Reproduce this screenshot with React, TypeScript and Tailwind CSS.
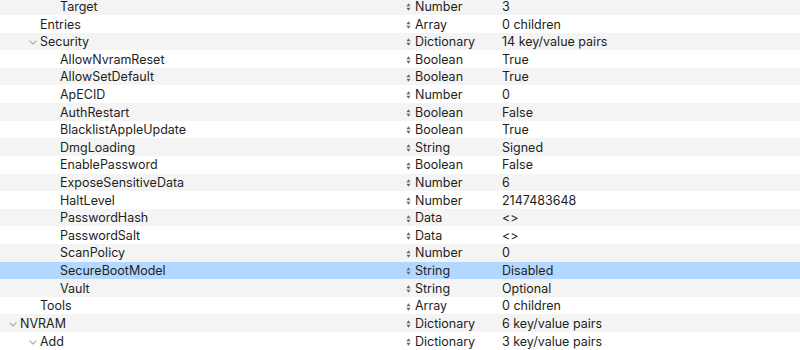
import React from "react";

type Row = { key: string; level: number; expanded?: boolean; type: string; value: string; selected?: boolean };

const rows: Row[] = [
  { key: "Target", level: 2, type: "Number", value: "3" },
  { key: "Entries", level: 1, type: "Array", value: "0 children" },
  { key: "Security", level: 1, expanded: true, type: "Dictionary", value: "14 key/value pairs" },
  { key: "AllowNvramReset", level: 2, type: "Boolean", value: "True" },
  { key: "AllowSetDefault", level: 2, type: "Boolean", value: "True" },
  { key: "ApECID", level: 2, type: "Number", value: "0" },
  { key: "AuthRestart", level: 2, type: "Boolean", value: "False" },
  { key: "BlacklistAppleUpdate", level: 2, type: "Boolean", value: "True" },
  { key: "DmgLoading", level: 2, type: "String", value: "Signed" },
  { key: "EnablePassword", level: 2, type: "Boolean", value: "False" },
  { key: "ExposeSensitiveData", level: 2, type: "Number", value: "6" },
  { key: "HaltLevel", level: 2, type: "Number", value: "2147483648" },
  { key: "PasswordHash", level: 2, type: "Data", value: "<>" },
  { key: "PasswordSalt", level: 2, type: "Data", value: "<>" },
  { key: "ScanPolicy", level: 2, type: "Number", value: "0" },
  { key: "SecureBootModel", level: 2, type: "String", value: "Disabled", selected: true },
  { key: "Vault", level: 2, type: "String", value: "Optional" },
  { key: "Tools", level: 1, type: "Array", value: "0 children" },
  { key: "NVRAM", level: 0, expanded: true, type: "Dictionary", value: "6 key/value pairs" },
  { key: "Add", level: 1, expanded: true, type: "Dictionary", value: "3 key/value pairs" },
];

const indentClass = ["w-[20px]", "w-[40px]", "w-[60px]"];

function Chevron() {
  return (
    <svg width="8" height="5" viewBox="0 0 8 5" className="absolute left-[-11px] top-[4px]">
      <path d="M0.6 0.6 L4 4 L7.4 0.6" fill="none" stroke="#a8a8a8" strokeWidth="1.1" />
    </svg>
  );
}

function UpDown() {
  return (
    <svg width="5" height="8" viewBox="0 0 5 8" className="shrink-0">
      <path d="M2.5 0.3 L4.6 3.2 L0.4 3.2 Z" fill="#6b6b6b" />
      <path d="M2.5 7.7 L4.6 4.8 L0.4 4.8 Z" fill="#6b6b6b" />
    </svg>
  );
}

export default function App() {
  return (
    <div
      className="w-[800px] h-[350px] overflow-hidden bg-white text-[12.5px] text-[#1e1e1e]"
      style={{ fontFamily: "Inter, 'Liberation Sans', sans-serif" }}
    >
      <div className="mt-[-2.6px] flex flex-col">
        {rows.map((r, i) => (
          <div
            key={i}
            className={
              "flex items-center h-[17.62px] pt-[2px] " +
              (r.selected ? "bg-[#b3d7ff]" : i % 2 === 0 ? "bg-[#f4f4f4]" : "bg-white")
            }
          >
            <div className="w-[406px] flex items-center shrink-0">
              <div className={indentClass[r.level] + " shrink-0"} />
              <div className="relative leading-none">
                {r.expanded && <Chevron />}
                <span>{r.key}</span>
              </div>
            </div>
            <div className="w-[96px] flex items-center gap-[4px] shrink-0">
              <UpDown />
              <span className="leading-none">{r.type}</span>
            </div>
            <div className="leading-none">{r.value}</div>
          </div>
        ))}
      </div>
    </div>
  );
}
